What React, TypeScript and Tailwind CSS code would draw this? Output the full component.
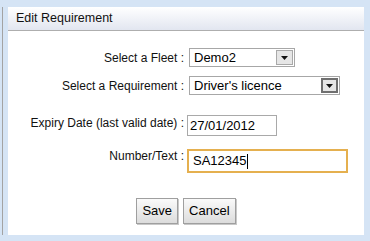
import React from "react";

const font = "font-['Liberation_Sans',Arial,sans-serif]";

// fake dropdown, looks like the old IE style select
const SelectBox = ({
  value,
  width,
  hot = false,
}: {
  value: string;
  width: string;
  hot?: boolean;
}) => (
  <div
    className={`flex items-stretch h-[19px] border border-[#a7a7a7] bg-white ${width}`}
  >
    <span className="flex-1 pl-[4px] text-[13px] leading-[17px] text-black">
      {value}
    </span>
    <span
      className={`flex items-center justify-center w-[17px] m-[1px] bg-[#e6e6e6] ${
        hot ? "border-2 border-[#6f6f6f]" : "border border-[#a9a9a9]"
      }`}
    >
      <svg width="7" height="4" viewBox="0 0 7 4">
        <path d="M0 0h7L3.5 4z" fill="#111" />
      </svg>
    </span>
  </div>
);

const btn =
  "h-[26px] px-[5px] border border-[#9f9f9f] bg-gradient-to-b from-[#fafafa] to-[#dcdcdc] text-[13px] text-black shadow-[1px_1px_0_#c8c8c8]";

export default function App() {
  return (
    <div className={`w-[370px] h-[241px] bg-[#d5e4f5] pl-[2px] pt-[7px] ${font}`}>
      <div className="flex h-[228px] border-l border-[#a3a3a3] pl-[5px]">
        <div className="flex flex-col w-[356px] bg-white">
          {/* Header */}
          <div className="h-[24px] border-b border-[#aeaeae] bg-gradient-to-b from-[#ffffff] to-[#e2e6f0] pl-[8px] text-[12.5px] leading-[23px] text-[#111]">
            Edit Requirement
          </div>

          {/* Form */}
          <div className="grid grid-cols-[179px_1fr] mt-[17px] text-[12px] text-[#111]">
            <div className="flex items-center justify-end pr-[3px] h-[19px]">
              Select a Fleet :
            </div>
            <div className="pl-[2px]">
              <SelectBox value="Demo2" width="w-[106px]" />
            </div>

            <div className="flex items-center justify-end pr-[3px] h-[20px] mt-[9px]">
              Select a Requirement :
            </div>
            <div className="pl-[2px] mt-[9px]">
              <SelectBox value="Driver's licence" width="w-[151px]" hot />
            </div>

            <div className="flex justify-end pr-[3px] mt-[19px] pt-[1px] leading-[14px]">
              Expiry Date (last valid date) :
            </div>
            <div className="mt-[19px]">
              <div className="w-[90px] h-[21px] border border-[#a9a9a9] pl-[2px] text-[13px] leading-[19px] text-black">
                27/01/2012
              </div>
            </div>

            <div className="flex justify-end pr-[3px] mt-[13px] leading-[14px]">
              Number/Text :
            </div>
            <div className="mt-[13px]">
              <div className="flex items-center w-[161px] h-[24px] border-2 border-[#e5b04f] pl-[4px] text-[13px] text-black">
                SA12345
                <span className="w-[1px] h-[15px] bg-black" />
              </div>
            </div>
          </div>

          {/* Buttons */}
          <div className="flex justify-center gap-[5px] mt-[25px]">
            <button type="button" className={btn}>
              Save
            </button>
            <button type="button" className={btn}>
              Cancel
            </button>
          </div>
        </div>
      </div>
    </div>
  );
}
